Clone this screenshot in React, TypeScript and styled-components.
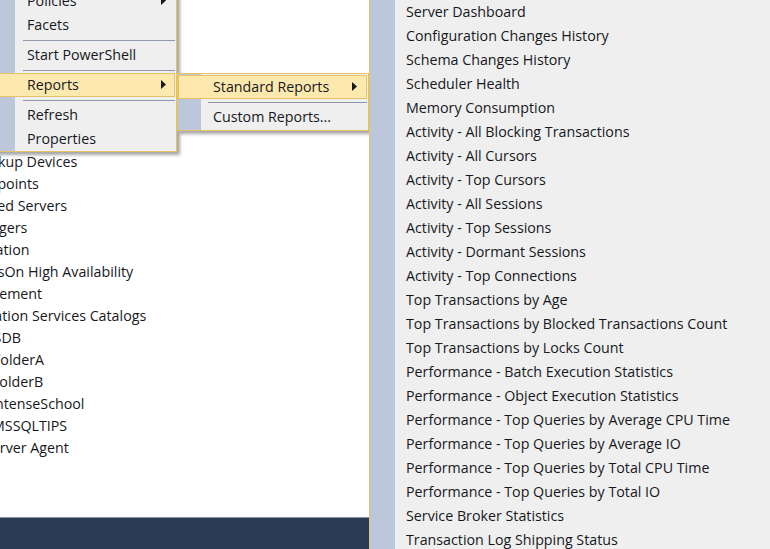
import React from "react";
import styled, { createGlobalStyle } from "styled-components";

const Global = createGlobalStyle`
  html, body { margin: 0; padding: 0; width: 770px; height: 549px; overflow: hidden; background: #fff; }
  #root { width: 770px; height: 549px; }
`;

const Page = styled.div`
  display: flex;
  width: 770px;
  height: 549px;
  overflow: hidden;
  font-family: "Open Sans", "Noto Sans", sans-serif;
  font-size: 14.25px;
  color: #16181d;
`;

const LeftPane = styled.section`
  position: relative;
  width: 369px;
  height: 549px;
  display: flex;
  flex-direction: column;
  overflow: hidden;
  background: #fff;
`;

const Tree = styled.ul`
  flex: 1;
  list-style: none;
  margin: 0;
  padding: 151px 0 0;
`;

const TreeRow = styled.li<{ $offset: number }>`
  height: 22px;
  line-height: 22px;
  white-space: nowrap;
  margin-left: ${(p) => p.$offset}px;
`;

const StatusBar = styled.footer`
  height: 31px;
  background: #2b3a55;
  border-top: 1px solid #8a93a3;
`;

const Divider = styled.div`
  width: 1px;
  background: #e5c365;
`;

const MenuPane = styled.ul`
  flex: 1;
  list-style: none;
  margin: 0;
  padding: 0 0 0 25px;
  background: linear-gradient(to right, #bcc7dc 25px, #efefef 25px);
`;

const MenuRow = styled.li`
  height: 24px;
  line-height: 24px;
  padding-left: 11px;
  white-space: nowrap;
`;

const PopupMenu = styled.div`
  position: absolute;
  left: -40px;
  top: -12px;
  width: 215px;
  border: 1px solid #e5c365;
  background: linear-gradient(to right, #bcc7dc 54px, #efefef 54px);
  box-shadow: 3px 3px 3px rgba(60, 60, 60, 0.45);
`;

const SubMenu = styled.div`
  position: absolute;
  left: 177px;
  top: 73px;
  width: 190px;
  padding: 1px 0;
  border: 1px solid #e5c365;
  background: linear-gradient(to right, #bcc7dc 23px, #efefef 23px);
  box-shadow: 3px 3px 3px rgba(60, 60, 60, 0.45);
`;

const Item = styled.div<{ $active?: boolean; $indent: number; $tail: number }>`
  display: flex;
  align-items: center;
  justify-content: space-between;
  height: 24px;
  box-sizing: border-box;
  margin-right: 1px;
  padding-left: ${(p) => p.$indent}px;
  padding-right: ${(p) => p.$tail}px;
  padding-bottom: 2px;
  white-space: nowrap;
  background: ${(p) => (p.$active ? "#fde9ae" : "transparent")};
  outline: ${(p) => (p.$active ? "1px solid #e5c365" : "none")};
  outline-offset: -1px;
`;

const Sep = styled.div<{ $indent: number }>`
  height: 1px;
  margin: 3px 1px 2px ${(p) => p.$indent}px;
  background: #8f97ad;
`;

const Arrow = styled.svg`
  width: 5px;
  height: 9px;
  fill: #16181d;
`;

const Caret = () => (
  <Arrow viewBox="0 0 5 9">
    <path d="M0 0 L5 4.5 L0 9 Z" />
  </Arrow>
);

const tree: [string, number][] = [
  ["Backup Devices", -26],
  ["Endpoints", -28],
  ["Linked Servers", -30],
  ["Triggers", -26],
  ["Replication", -44],
  ["AlwaysOn High Availability", -41],
  ["Management", -46],
  ["Integration Services Catalogs", -45],
  ["SSISDB", -26],
  ["FolderA", -7],
  ["FolderB", -8],
  ["IntenseSchool", -9],
  ["MSSQLTIPS", -8],
  ["SQL Server Agent", -46],
];

const reports = [
  "Server Dashboard",
  "Configuration Changes History",
  "Schema Changes History",
  "Scheduler Health",
  "Memory Consumption",
  "Activity - All Blocking Transactions",
  "Activity - All Cursors",
  "Activity - Top Cursors",
  "Activity - All Sessions",
  "Activity - Top Sessions",
  "Activity - Dormant Sessions",
  "Activity - Top Connections",
  "Top Transactions by Age",
  "Top Transactions by Blocked Transactions Count",
  "Top Transactions by Locks Count",
  "Performance - Batch Execution Statistics",
  "Performance - Object Execution Statistics",
  "Performance - Top Queries by Average CPU Time",
  "Performance - Top Queries by Average IO",
  "Performance - Top Queries by Total CPU Time",
  "Performance - Top Queries by Total IO",
  "Service Broker Statistics",
  "Transaction Log Shipping Status",
];

export default function App() {
  return (
    <Page>
      <Global />
      <LeftPane>
        <Tree>
          {tree.map(([t, o]) => (
            <TreeRow key={t} $offset={o}>{t}</TreeRow>
          ))}
        </Tree>
        <StatusBar />
        <PopupMenu>
          <Item $indent={66} $tail={9}>Policies<Caret /></Item>
          <Item $indent={66} $tail={9}>Facets</Item>
          <Sep $indent={62} />
          <Item $indent={66} $tail={9}>Start PowerShell</Item>
          <Sep $indent={62} />
          <Item $indent={66} $tail={9} $active>Reports<Caret /></Item>
          <Sep $indent={62} />
          <Item $indent={66} $tail={9}>Refresh</Item>
          <Item $indent={66} $tail={9}>Properties</Item>
        </PopupMenu>
        <SubMenu>
          <Item $indent={35} $tail={10} $active>Standard Reports<Caret /></Item>
          <Sep $indent={30} />
          <Item $indent={35} $tail={10}>Custom Reports...</Item>
        </SubMenu>
      </LeftPane>
      <Divider />
      <MenuPane>
        {reports.map((r) => (
          <MenuRow key={r}>{r}</MenuRow>
        ))}
      </MenuPane>
    </Page>
  );
}
